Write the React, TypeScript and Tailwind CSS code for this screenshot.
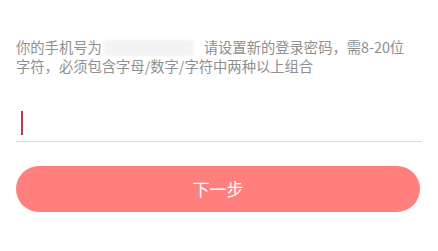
export default function App() {
  return (
    <div
      className="h-[251px] w-[438px] bg-white pl-4 pr-[16px] pt-[37px]"
      style={{ fontFamily: '"Noto Sans CJK SC", "Noto Sans", sans-serif' }}
    >
      <p className="w-[404px] text-[14.3px] leading-[19px] text-[#8f8f8f]">
        你的手机号为
        <span className="ml-[2px] mr-[10px] inline-block h-[16px] w-[90px] rounded-[3px] bg-[#f3f3f3] align-[-3px] blur-[1px]" />
        请设置新的登录密码，需8-20位
        <br />
        字符，必须包含字母/数字/字符中两种以上组合
      </p>

      <div className="mt-[29px] flex h-[38px] w-[406px] items-center border-b border-[#dcdcdc]">
        <span className="ml-[5px] h-[24px] w-[2px] bg-[#c03a4c]" />
      </div>

      <button
        type="button"
        className="mt-[24px] flex h-[46px] w-[404px] items-center justify-center rounded-full bg-[#ff7f7f] text-[17px] text-white"
      >
        下一步
      </button>
    </div>
  )
}
